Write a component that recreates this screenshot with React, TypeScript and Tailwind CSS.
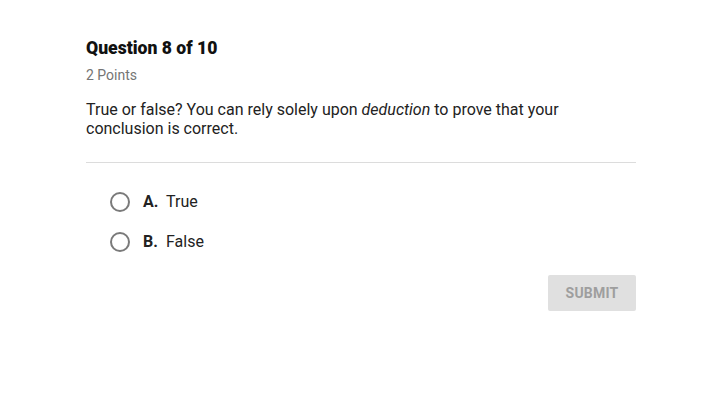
export default function App() {
  return (
    <div className="w-[715px] h-[407px] bg-white font-['Roboto',sans-serif] text-[#212121]">
      <div className="w-[550px] ml-[86px] pt-[38px]">
        <h1 className="text-[17.6px] leading-[20px] font-black text-[#111]">Question 8 of 10</h1>
        <p className="mt-[9px] text-[14px] leading-[17px] text-[#757575]">2 Points</p>
        <p className="mt-[16px] text-[16px] leading-[19px] text-[#222]">
          True or false? You can rely solely upon <em>deduction</em> to prove that your conclusion is correct.
        </p>
        <div className="mt-[24px] border-t border-[#dcdcdc]" />
        <div className="mt-[29px] ml-[24px] flex flex-col gap-[20px]">
          {[
            ['A.', 'True'],
            ['B.', 'False'],
          ].map(([letter, label]) => (
            <label key={letter} className="flex items-center h-[20px]">
              <span className="w-[20px] h-[20px] rounded-full border-2 border-[#7a7a7a]" />
              <span className="ml-[13px] w-[23px] text-[16px] font-bold text-[#222]">{letter}</span>
              <span className="text-[16px] text-[#222]">{label}</span>
            </label>
          ))}
        </div>
        <div className="mt-[23px] flex justify-end">
          <button className="w-[88px] h-[36px] bg-[#e0e0e0] rounded-[2px] text-[14px] font-bold text-[#9e9e9e] tracking-[0.2px]">
            SUBMIT
          </button>
        </div>
      </div>
    </div>
  );
}
